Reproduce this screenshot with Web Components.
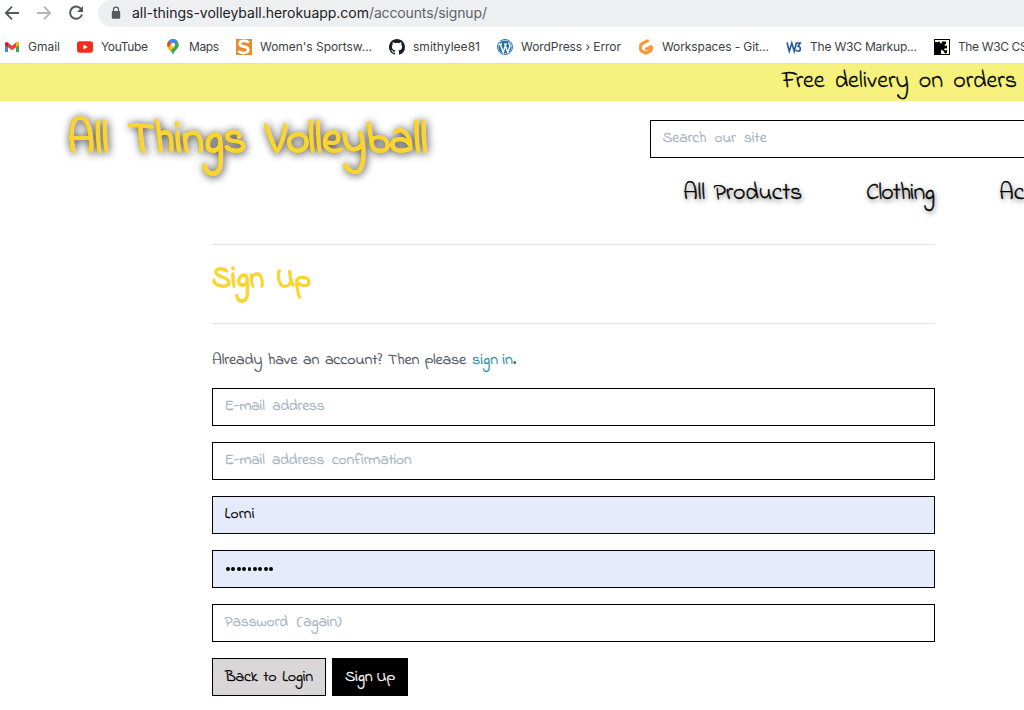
<!DOCTYPE html>
<html lang="en">
<head>
<meta charset="utf-8">
<title>All Things Volleyball</title>
<style>
body{margin:0;background:#fff;width:1024px;height:710px;overflow:hidden}
</style>
</head>
<body>
<volley-page></volley-page>
<script>
const make = (name, html, init) => {
  const t = document.createElement('template');
  t.innerHTML = html;
  customElements.define(name, class extends HTMLElement {
    connectedCallback() {
      if (this.shadowRoot) return;
      this.attachShadow({mode: 'open'}).append(t.content.cloneNode(true));
      if (init) init(this, this.shadowRoot);
    }
  });
};

/* Text run spaced to an exact width: between words if it has any gaps, or between letters.
   "ls" sets a base letter spacing before the words are spaced. */
make('fit-text', `<style>:host{display:inline-block;white-space:nowrap;flex:none;font-variant-ligatures:none}span{display:inline}</style><span><slot></slot></span>`,
  (el, root) => {
    const w = parseFloat(el.getAttribute('w'));
    const s = root.querySelector('span');
    const txt = el.textContent;
    const gaps = txt.split(' ').length - 1;
    el.style.width = w + 'px';
    if (el.hasAttribute('ls')) s.style.letterSpacing = el.getAttribute('ls') + 'px';
    const extra = w - s.getBoundingClientRect().width;
    if (gaps && !el.hasAttribute('letters')) s.style.wordSpacing = (extra / gaps).toFixed(3) + 'px';
    else s.style.letterSpacing = (extra / (txt.length - 1)).toFixed(3) + 'px';
  });

make('browser-toolbar', `<style>
:host{display:flex;height:27px;background:#fff;overflow:hidden;font:14px/26px Inter,sans-serif;color:#202124}
.nav{width:98px;flex:none;display:flex}
.nav svg{display:block}
.bar{flex:1;height:27px;background:#eeeff1;border-radius:13px 0 0 14px;display:flex;align-items:center;padding:0 0 1px 13px;box-sizing:border-box}
.bar svg{margin-right:11px;flex:none}
.path{color:#5f6368}
</style>
<div class="nav"><svg width="98" height="27" fill="none" stroke-width="1.8">
<path d="M19 13H6M12 6.7L5.8 13l6.2 6.3" stroke="#55585d"/>
<path d="M37 13h13M44 6.7l6.2 6.3-6.2 6.3" stroke="#b4b6b9"/>
<path d="M81.2 9.2A6.1 6.1 0 1 0 82 14.5" stroke="#55585d" stroke-width="2"/><path d="M83 6v6h-6z" fill="#55585d"/></svg></div>
<div class="bar"><svg width="10" height="14" viewBox="0 0 10 14"><path d="M2.5 6V3.6a2.5 2.5 0 0 1 5 0V6" fill="none" stroke="#55585d" stroke-width="1.3"/><rect x=".8" y="5" width="8.4" height="7.7" rx="1" fill="#55585d"/></svg>
<fit-text w="237">all-things-volleyball.herokuapp.com</fit-text><fit-text class="path" w="118">/accounts/signup/</fit-text></div>`);

const icons = {
  gmail: `<path d="M1 13V5h3v8zM12 13V5h3v8z" fill="#4285f4"/><path d="M12 13V5h3v8z" fill="#34a853"/><path d="M1 6V4.3Q1.8 2.4 3.7 3.3L8 6.8l4.3-3.5Q14.2 2.4 15 4.3V6l-7 5.2z" fill="#ea4335"/><path d="M12 4l.9-.8Q14.5 2.6 15 4.3V6l-3 2.3z" fill="#fbbc04"/><path d="M1 6V4.3L4 4v4.3z" fill="#c5221f"/>`,
  youtube: `<rect x="0" y="2.2" width="16" height="11.6" rx="2.8" fill="#f42c1d"/><path d="M6.5 5.5v5L10.8 8z" fill="#fff"/>`,
  maps: `<path d="M8 0a5.8 5.8 0 0 0-5.8 5.8C2.2 10 6.8 11 8 16c1.2-5 5.8-6 5.8-10.2A5.8 5.8 0 0 0 8 0z" fill="#34a853"/><path d="M3.6 2L8 5.8 4 10.4Q2.2 8.3 2.2 5.8 2.2 3.7 3.6 2z" fill="#fbbc04"/><path d="M3.6 2A5.8 5.8 0 0 1 12.6 2.2L4.3 9.5 2.7 7.8 6 4z" fill="#4285f4"/><path d="M3.6 2L6.8 4.8 3 8.4Q1.3 4.7 3.6 2z" fill="#ea4335"/><path d="M2.9 8.5L6 5l3.6 3.6L5 12z" fill="#fbbc04"/><circle cx="8" cy="5.8" r="2.1" fill="#fff"/>`,
  sports: `<rect width="16" height="16" fill="#e88b2d"/><path d="M13 3.5Q10.5 1.6 7.3 1.9 3.7 2.3 3.8 4.8 4 7 8 7.6q4.3.7 4.3 3.2 0 2.7-4 3.2-3.1.3-6-1.8" fill="none" stroke="#fff" stroke-width="2.7"/>`,
  github: `<path fill="#1b1f23" d="M8 0C3.58 0 0 3.58 0 8c0 3.54 2.29 6.53 5.47 7.59.4.07.55-.17.55-.38 0-.19-.01-.82-.01-1.49-2.01.37-2.53-.49-2.69-.94-.09-.23-.48-.94-.82-1.13-.28-.15-.68-.52-.01-.53.63-.01 1.08.58 1.23.82.72 1.21 1.87.87 2.33.66.07-.52.28-.87.51-1.07-1.78-.2-3.64-.89-3.64-3.95 0-.87.31-1.59.82-2.15-.08-.2-.36-1.02.08-2.12 0 0 .67-.21 2.2.82a7.6 7.6 0 0 1 4 0c1.53-1.04 2.2-.82 2.2-.82.44 1.1.16 1.92.08 2.12.51.56.82 1.27.82 2.15 0 3.07-1.87 3.75-3.65 3.95.29.25.54.73.54 1.48 0 1.07-.01 1.93-.01 2.2 0 .21.15.46.55.38A8.01 8.01 0 0 0 16 8c0-4.42-3.58-8-8-8z"/>`,
  wordpress: `<circle cx="8" cy="8" r="7.5" fill="#fff" stroke="#2874a5"/><circle cx="8" cy="8" r="6.6" fill="#2874a5"/><path d="M2 5.2h3M7 5.2h3M3.2 5.3l3 8L8.3 7M7.8 5.3l3 8 2.3-6.6Q12.6 5 11.6 3.7" fill="none" stroke="#fff" stroke-width="1.4"/>`,
  gitpod: `<path d="M9.4 1.8L3.8 4.9Q2.6 5.5 2.6 6.6v3.6q0 1.1.9 1.6l3.7 2.1q.8.4 1.6 0l3.7-2.1q.9-.5.9-1.6V7.6L8.6 10" fill="none" stroke="#fa9638" stroke-width="3.1" stroke-linecap="round" stroke-linejoin="round"/>`,
  w3: `<path d="M1 3.5l2.3 8.8L5.8 4l2.4 8.3 2.3-8.8M10 4h4.3l-2.2 3.3q2.2.4 2.2 2.4 0 2.5-2.2 2.5-1.5 0-2.2-1.3" fill="none" stroke="#2557a2" stroke-width="1.6"/>`,
  css: `<rect x=".5" y=".5" width="15" height="15" fill="#fffbe9" stroke="#000"/><path d="M1 3h3l1.5-.7L6 4l1.5.5L8 2.5h4V5l-1.5.5.5 1.5 2-.5v3l-2-.3-1 1 1 1.3 2-.5v3l-2 .5-1.5-2.5-2-1.5L7 12v3H1z"/>`
};
customElements.define('bookmark-item', class extends HTMLElement {
  connectedCallback() {
    this.attachShadow({mode: 'open'}).innerHTML = `<style>:host{display:flex;align-items:center;flex:none}svg{display:block;margin-right:8px;flex:none}</style><svg width="16" height="16" viewBox="0 0 16 16">${icons[this.getAttribute('icon')]}</svg><slot></slot>`;
  }
});

make('bookmarks-bar', `<style>
:host{display:flex;height:37px;padding:3px 0 0 4px;box-sizing:border-box;border-bottom:1px solid #d9dadc;font:12px/20px Inter,sans-serif;color:#3c4043;overflow:hidden;align-items:center;gap:17px}
</style>
<bookmark-item icon="gmail"><fit-text w="32">Gmail</fit-text></bookmark-item>
<bookmark-item icon="youtube"><fit-text w="47">YouTube</fit-text></bookmark-item>
<bookmark-item icon="maps"><fit-text w="30">Maps</fit-text></bookmark-item>
<bookmark-item icon="sports"><fit-text letters w="112">Women's Sportsw...</fit-text></bookmark-item>
<bookmark-item icon="github"><fit-text w="67">smithylee81</fit-text></bookmark-item>
<bookmark-item icon="wordpress"><fit-text letters w="100">WordPress › Error</fit-text></bookmark-item>
<bookmark-item icon="gitpod"><fit-text letters w="107">Workspaces - Git...</fit-text></bookmark-item>
<bookmark-item icon="w3"><fit-text letters w="107">The W3C Markup...</fit-text></bookmark-item>
<bookmark-item icon="css"><fit-text letters w="77">The W3C CSS</fit-text></bookmark-item>`);

make('delivery-banner', `<style>:host{display:flex;height:37px;box-sizing:border-box;background:#f5f17c;padding:0 7px 0 0;justify-content:flex-end;font-size:24px;line-height:35px;color:#000}</style><slot></slot>`);

make('text-field', `<style>
:host{display:block;height:38px;box-sizing:border-box;border:1px solid #000;background:#fff;padding:0 0 0 11.5px;font-size:15.5px;line-height:36px;color:#a3b1c1;overflow:hidden}
:host([filled]){background:#e5ebfb;color:#000}
</style><slot></slot>`);

make('action-button', `<style>
:host{display:flex;height:38px;box-sizing:border-box;border:1px solid #000;background:#d8d6d7;color:#000;padding:0 12px;font-size:16px;line-height:37px}
:host([primary]){background:#000;color:#fff}
</style><slot></slot>`);

make('site-header', `<style>
:host{display:grid;grid-template-columns:650px 374px;height:143px;overflow:hidden}
.logo{padding:7px 0 0 67px;font-size:45px;line-height:66px;font-weight:700;color:#fbd52f;text-shadow:1px 1px 8px #000}
.right{padding-top:19px;width:474px}
.links{display:flex;gap:64px;padding:14px 0 0 33px;font-size:24px;line-height:44px;color:#000;text-shadow:1px 2px 5px rgba(0,0,0,.6)}
</style>
<div class="logo"><fit-text ls="-.5" w="360">All Things Volleyball</fit-text></div>
<div class="right"><text-field><fit-text ls="-.1" w="104">Search our site</fit-text></text-field>
<div class="links"><fit-text ls="-.25" w="119">All Products</fit-text><fit-text w="69">Clothing</fit-text><fit-text w="117">Accessories</fit-text></div></div>`);

make('signup-form', `<style>
:host{display:block;width:723px;margin-left:212px}
h1{margin:0;border:solid #e3e4e5;border-width:1px 0;height:80px;box-sizing:border-box;font-size:30px;line-height:71px;font-weight:700;color:#fbd52f}
p{display:flex;margin:0;height:64px;font-size:16px;line-height:73px;color:#50565d}
a{color:#2a8ba5;margin-left:6px}
.fields{display:grid;gap:16px}
.actions{display:flex;gap:6px;margin-top:16px}
.dots{display:flex;height:35px;align-items:center;gap:1.5px;padding-left:1.5px}
.dots i{width:3.9px;height:4px;border-radius:50%;background:#000}
</style>
<h1><fit-text ls="-.2" w="99">Sign Up</fit-text></h1>
<p><fit-text ls="-.15" w="254">Already have an account? Then please</fit-text><a><fit-text w="41">sign in</fit-text></a><span>.</span></p>
<div class="fields">
<text-field><fit-text ls="-.15" w="100">E-mail address</fit-text></text-field>
<text-field><fit-text ls="-.15" w="187">E-mail address confirmation</fit-text></text-field>
<text-field filled><fit-text w="30">Lorni</fit-text></text-field>
<text-field filled><div class="dots"><i></i><i></i><i></i><i></i><i></i><i></i><i></i><i></i><i></i></div></text-field>
<text-field><fit-text ls="-.05" w="117">Password (again)</fit-text></text-field>
</div>
<div class="actions"><action-button><fit-text ls="-.25" w="88">Back to Login</fit-text></action-button><action-button primary><fit-text ls="-.2" w="50">Sign Up</fit-text></action-button></div>`);

make('volley-page', `<style>
:host{display:block;width:1024px;height:710px;overflow:hidden;font-family:"Indie Flower",Lato,sans-serif}
delivery-banner,site-header,signup-form{-webkit-text-stroke:.3px}
</style>
<browser-toolbar></browser-toolbar>
<bookmarks-bar></bookmarks-bar>
<delivery-banner><fit-text w="235">Free delivery on orders</fit-text></delivery-banner>
<site-header></site-header>
<signup-form></signup-form>`);
</script>
</body>
</html>
